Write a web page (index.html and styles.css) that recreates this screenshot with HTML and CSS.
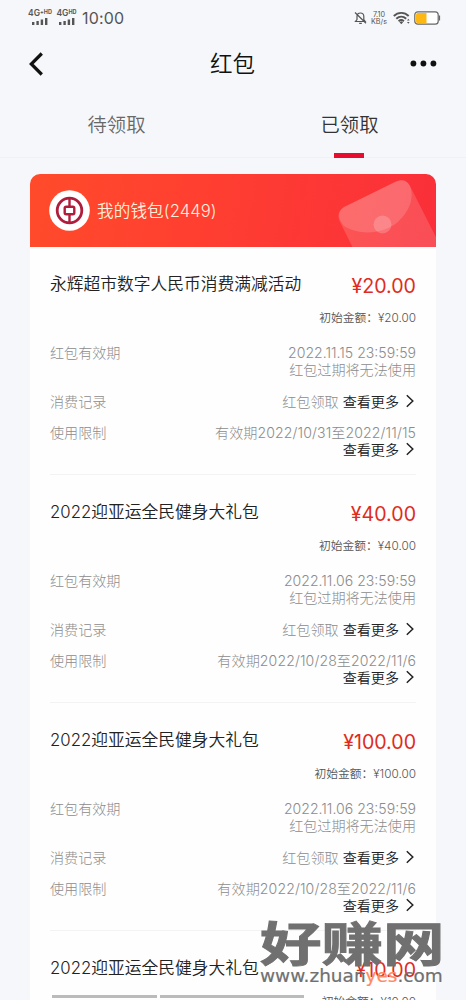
FILE: index.html
```html
<!DOCTYPE html>
<html lang="zh-CN">
<head>
<meta charset="utf-8">
<title>红包</title>
<link rel="stylesheet" href="styles.css">
</head>
<body>
<svg class="defs" width="0" height="0">
  <symbol id="bars" viewBox="0 0 16 7"><path d="M0 4h2.4v3H0zM4.4 3h2.4v4H4.4zM8.7 1.5h2.4V7H8.7zM13 0h2.4v7H13z"/></symbol>
  <symbol id="chev" viewBox="0 0 8 14"><path d="M.8 1.2 6.8 7 .8 12.8" fill="none" stroke="#222" stroke-width="1.5"/></symbol>
</svg>
<div class="screen">
  <div class="status">
    <div class="sim sim-a"><span>4G<sup>+HD</sup></span><svg width="16" height="7"><use href="#bars"/></svg></div>
    <div class="sim sim-b"><span>4G<sup>HD</sup></span><svg width="16" height="7"><use href="#bars"/></svg></div>
    <span class="clock">10:00</span>
    <svg class="bell" width="13" height="14" viewBox="0 0 13 14"><path d="M2.5 10.5h8.7l-1.4-2V5.3C9.8 3.2 8.5 2 6.5 2S3 3.2 3 5.3v3.2l-1.5 2zM5.2 12.3h2.6M1 1.5l11 10.8" fill="none" stroke="#555" stroke-width="1.2"/></svg>
    <div class="rate"><span>7.10</span><span>KB/s</span></div>
    <svg class="wifi" width="18" height="14" viewBox="0 0 18 14"><g fill="none" stroke="#555" stroke-width="1.9"><path d="M.8 5C5 .8 11.500.8 15.700 5"/><path d="M3.300 7.700c3-2.800 6.900-2.800 9.900 0"/><path d="M5.600 10.200c1.700-1.500 3.600-1.500 5.300 0"/></g><path d="m6.500 11.300 1.800-1 1.800 1-1.800 1.900zM14 9.400l1.300-1.700 1.300 1.700zM14 11l1.300 1.700 1.300-1.700z" fill="#555"/></svg>
    <svg class="battery" width="27" height="14" viewBox="0 0 27 14"><rect x=".8" y=".8" width="23.400" height="12.400" rx="3" fill="#fff" stroke="#666" stroke-width="1.200"/><path d="M3.500 2H12.500v10H3.500Q2 12 2 10.500v-7Q2 2 3.500 2z" fill="#fdb813"/><path d="M25.500 4.500v5" stroke="#666" stroke-width="1.200"/></svg>
  </div>
  <div class="nav">
    <svg width="27" height="24" viewBox="0 0 27 24"><path d="M13.800 1.500 3.300 12l10.500 10.500" fill="none" stroke="#111" stroke-width="3.200"/></svg>
    <h1>红包</h1>
    <svg width="27" height="7" viewBox="0 0 27 7" fill="#111"><circle cx="3.400" cy="3.500" r="2.900"/><circle cx="13.400" cy="3.500" r="2.900"/><circle cx="23.400" cy="3.500" r="2.900"/></svg>
  </div>
  <div class="tabs"><div class="tab">待领取</div><div class="tab active">已领取</div></div>
  <div class="card">
    <div class="wallet">
      <svg class="logo" width="41" height="41" viewBox="0 0 41 41"><circle cx="20.500" cy="20.500" r="20.300" fill="#fff"/><g fill="none" stroke="#b01c3c"><circle cx="20.500" cy="20.500" r="12.300" stroke-width="2.800"/><rect x="15.700" y="16.700" width="9.600" height="7.600" rx="1.500" stroke-width="2.400"/><path d="M20.500 8v8M20.500 25v8" stroke-width="2.400"/></g></svg>
      <span>我的钱包(2449)</span>
      <svg class="envelope" width="106" height="73" viewBox="0 0 106 73"><path d="M15.500 73 3 48C-.5 41 2 36 7 33L58 8c7-3.500 12-2 15 4l31 61z" transform="translate(1)" fill="#fff" fill-opacity=".15"/><path d="M8 52C1 44 2 37 8 33L59 8c7-3.500 12-2 15 4 5 14-2 26-12 36-15 12-38 14-54 4z" fill="#fff" fill-opacity=".15"/><circle cx="46.500" cy="50.500" r="9" fill="#fff" fill-opacity=".2"/></svg>
    </div>

    <div class="item">
      <div class="head"><h2>永辉超市数字人民币消费满减活动</h2><b>¥20.00</b></div>
      <p class="initial">初始金额：¥20.00</p>
      <div class="row validity"><span>红包有效期</span><div><span class="num">2022.11.15 23:59:59</span><br>红包过期将无法使用</div></div>
      <div class="row record"><span>消费记录</span><div>红包领取 <a>查看更多<svg width="8" height="14"><use href="#chev"/></svg></a></div></div>
      <div class="row limit"><span>使用限制</span><div><span class="range">有效期2022/10/31至2022/11/15</span><br><a>查看更多<svg width="8" height="14"><use href="#chev"/></svg></a></div></div>
    </div>

    <div class="item">
      <div class="head"><h2>2022迎亚运全民健身大礼包</h2><b>¥40.00</b></div>
      <p class="initial">初始金额：¥40.00</p>
      <div class="row validity"><span>红包有效期</span><div><span class="num">2022.11.06 23:59:59</span><br>红包过期将无法使用</div></div>
      <div class="row record"><span>消费记录</span><div>红包领取 <a>查看更多<svg width="8" height="14"><use href="#chev"/></svg></a></div></div>
      <div class="row limit"><span>使用限制</span><div><span class="range">有效期2022/10/28至2022/11/6</span><br><a>查看更多<svg width="8" height="14"><use href="#chev"/></svg></a></div></div>
    </div>

    <div class="item">
      <div class="head"><h2>2022迎亚运全民健身大礼包</h2><b>¥100.00</b></div>
      <p class="initial">初始金额：¥100.00</p>
      <div class="row validity"><span>红包有效期</span><div><span class="num">2022.11.06 23:59:59</span><br>红包过期将无法使用</div></div>
      <div class="row record"><span>消费记录</span><div>红包领取 <a>查看更多<svg width="8" height="14"><use href="#chev"/></svg></a></div></div>
      <div class="row limit"><span>使用限制</span><div><span class="range">有效期2022/10/28至2022/11/6</span><br><a>查看更多<svg width="8" height="14"><use href="#chev"/></svg></a></div></div>
    </div>

    <div class="item">
      <div class="head"><h2>2022迎亚运全民健身大礼包</h2><b>¥10.00</b></div>
      <p class="initial">初始金额：¥10.00</p>
    </div>
  </div>
  <div class="gesture"><i></i><i></i></div>
  <div class="watermark"><div class="brand">好赚网</div><div class="site">www.zhuan<em>yes</em>.com</div></div>
</div>
</body>
</html>
```
FILE: styles.css
```css
* { box-sizing: border-box; }
body { margin: 0; background: #f6f7fa; font-family: Inter, "Noto Sans CJK SC", sans-serif; }
h1, h2, p { margin: 0; font-weight: 400; }
.defs { position: absolute; }
.screen { position: relative; width: 466px; height: 1000px; overflow: hidden; display: flex; flex-direction: column; }

.status { height: 36px; flex: none; display: flex; align-items: center; padding: 0 25px 0 27px; color: #555; }
.sim { display: flex; flex-direction: column; align-items: center; fill: #555; font-size: 8.5px; line-height: 8px; font-weight: 600; white-space: nowrap; }
.sim span { height: 9px; margin-top: -2px; }
.sim sup { font-size: 5.5px; line-height: 1; vertical-align: 2px; font-weight: 700; }
.sim-a { width: 26px; margin-right: 3px; }
.sim-b { width: 21px; margin-right: 5px; }
.clock { font-size: 16px; letter-spacing: .2px; }
.bell { margin-left: auto; }
.rate { margin: 0 5px 0 3px; width: 18px; display: flex; flex-direction: column; align-items: center; font-size: 7.2px; line-height: 7px; }
.wifi { margin-right: 3px; }

.nav { height: 55px; flex: none; display: flex; align-items: center; justify-content: space-between; padding: 0 29px 0 28px; }
.nav h1 { font-size: 22.5px; line-height: 32px; color: #111; font-weight: 350; }

.tabs { height: 67px; flex: none; display: flex; border-bottom: 1px solid #f0f1f3; }
.tab { flex: 1; position: relative; text-align: center; font-size: 19.3px; line-height: 68px; color: #686868; font-weight: 350; }
.tab.active { color: #333; }
.tab.active::after { content: ""; position: absolute; left: 101px; bottom: -1px; width: 30px; height: 5px; background: #e60d2e; }

.card { width: 406px; margin: 16px 0 0 30px; flex: none; background: #fefefe; border-radius: 10px 10px 0 0; overflow: hidden; }
.wallet { position: relative; height: 73px; display: flex; align-items: center; gap: 7px; padding-left: 19px; background: linear-gradient(100deg, #ff4b2b, #ff3e31 45%, #fa2f3a); color: #fff0dc; font-size: 16.6px; font-weight: 350; }
.wallet span { position: relative; top: -1px; letter-spacing: .1px; }
.envelope { position: absolute; right: -6px; top: 0; }

.item { height: 228px; padding: 24px 20px 0; background: linear-gradient(#f3f3f3, #f3f3f3) 20px 100% / 366px 1px no-repeat; }
.head { display: flex; justify-content: space-between; height: 30px; }
.head h2 { font-size: 16.75px; line-height: 26px; color: #222; white-space: nowrap; font-weight: 350; }
.head b { font-size: 19.6px; line-height: 31px; font-weight: 400; color: #de2c20; }
.initial { margin-top: 7px; height: 18px; text-align: right; font-size: 11.75px; line-height: 20px; color: #555; font-weight: 350; }
.row { display: flex; justify-content: space-between; font-size: 14.1px; line-height: 17px; color: #8c8c8c; font-weight: 300; }
.row > div { text-align: right; white-space: nowrap; }
.validity { margin-top: 18px; height: 34px; }
.record { margin-top: 15px; height: 17px; }
.limit { margin-top: 14px; height: 34px; }
.range { letter-spacing: .1px; }
.row a { color: #222; font-weight: 350; }
.row a svg { margin: 0 2px 0 7px; vertical-align: -1px; }

.gesture { position: absolute; left: 52px; top: 995px; display: flex; gap: 3px; }
.gesture i { width: 105px; height: 3px; background: #bbb; }
.gesture i + i { width: 144px; }
.watermark { position: absolute; left: 260px; top: 920px; width: 186px; color: #707070; }
.brand { height: 47px; line-height: 47px; font-size: 61.5px; font-weight: 700; white-space: nowrap; transform: scaleY(.76); -webkit-text-stroke: 1.2px #707070; }
.site { width: 170px; font-family: "DejaVu Sans", sans-serif; font-size: 17.5px; line-height: 18px; white-space: nowrap; transform: scaleX(1.055); transform-origin: 0 0; -webkit-text-stroke: .2px currentColor; }
.site em { font-style: normal; color: #ff8a65; }
```
